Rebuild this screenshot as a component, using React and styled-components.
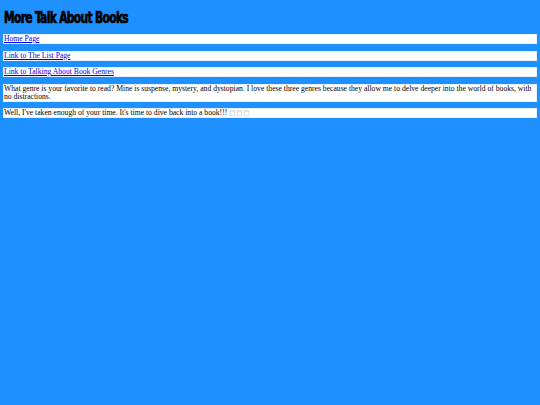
import React from "react";
import styled, { createGlobalStyle } from "styled-components";

const Global = createGlobalStyle`
  html, body { background: #1e90ff; }
  body {
    margin: 3px;
    font-family: "Liberation Serif", "Times New Roman", serif;
    font-size: 7.65px;
    line-height: 8px;
    color: #000;
  }
`;

const Title = styled.h1`
  margin: 7px 1px 8px;
  font-family: "DejaVu Sans Condensed", "DejaVu Sans", sans-serif;
  font-weight: 900;
  font-size: 15px;
  line-height: 16px;
  letter-spacing: -0.8px;
  color: #000;
  -webkit-text-stroke: 0.7px #000;
`;

const TitleText = styled.span`
  display: inline-block;
  transform: scaleX(0.79);
  transform-origin: left center;
  white-space: nowrap;
`;

const List = styled.div`
  display: flex;
  flex-direction: column;
  gap: 6.5px;
`;

const Box = styled.p`
  margin: 0;
  background: #fff;
  border: 1px solid #e6f0ff;
  padding: 0;
`;

const Link = styled.a`
  color: #0000ee;
  text-decoration: underline;
`;

const Glyph = styled.span`
  color: #a8a8a8;
  font-family: "DejaVu Sans", sans-serif;
  font-size: 6.5px;
  letter-spacing: 1px;
`;

export default function App() {
  return (
    <>
      <Global />
      <Title><TitleText>More Talk About Books</TitleText></Title>
      <List>
        <Box><Link href="#">Home Page</Link></Box>
        <Box><Link href="#">Link to The List Page</Link></Box>
        <Box><Link href="#">Link to Talking About Book Genres</Link></Box>
        <Box>
          What genre is your favorite to read? Mine is suspense, mystery, and dystopian. I love these three genres because they allow me to delve deeper into the world of books, with no distractions.
        </Box>
        <Box>
          Well, I've taken enough of your time. It's time to dive back into a book!!! <Glyph>□□□</Glyph>
        </Box>
      </List>
    </>
  );
}
